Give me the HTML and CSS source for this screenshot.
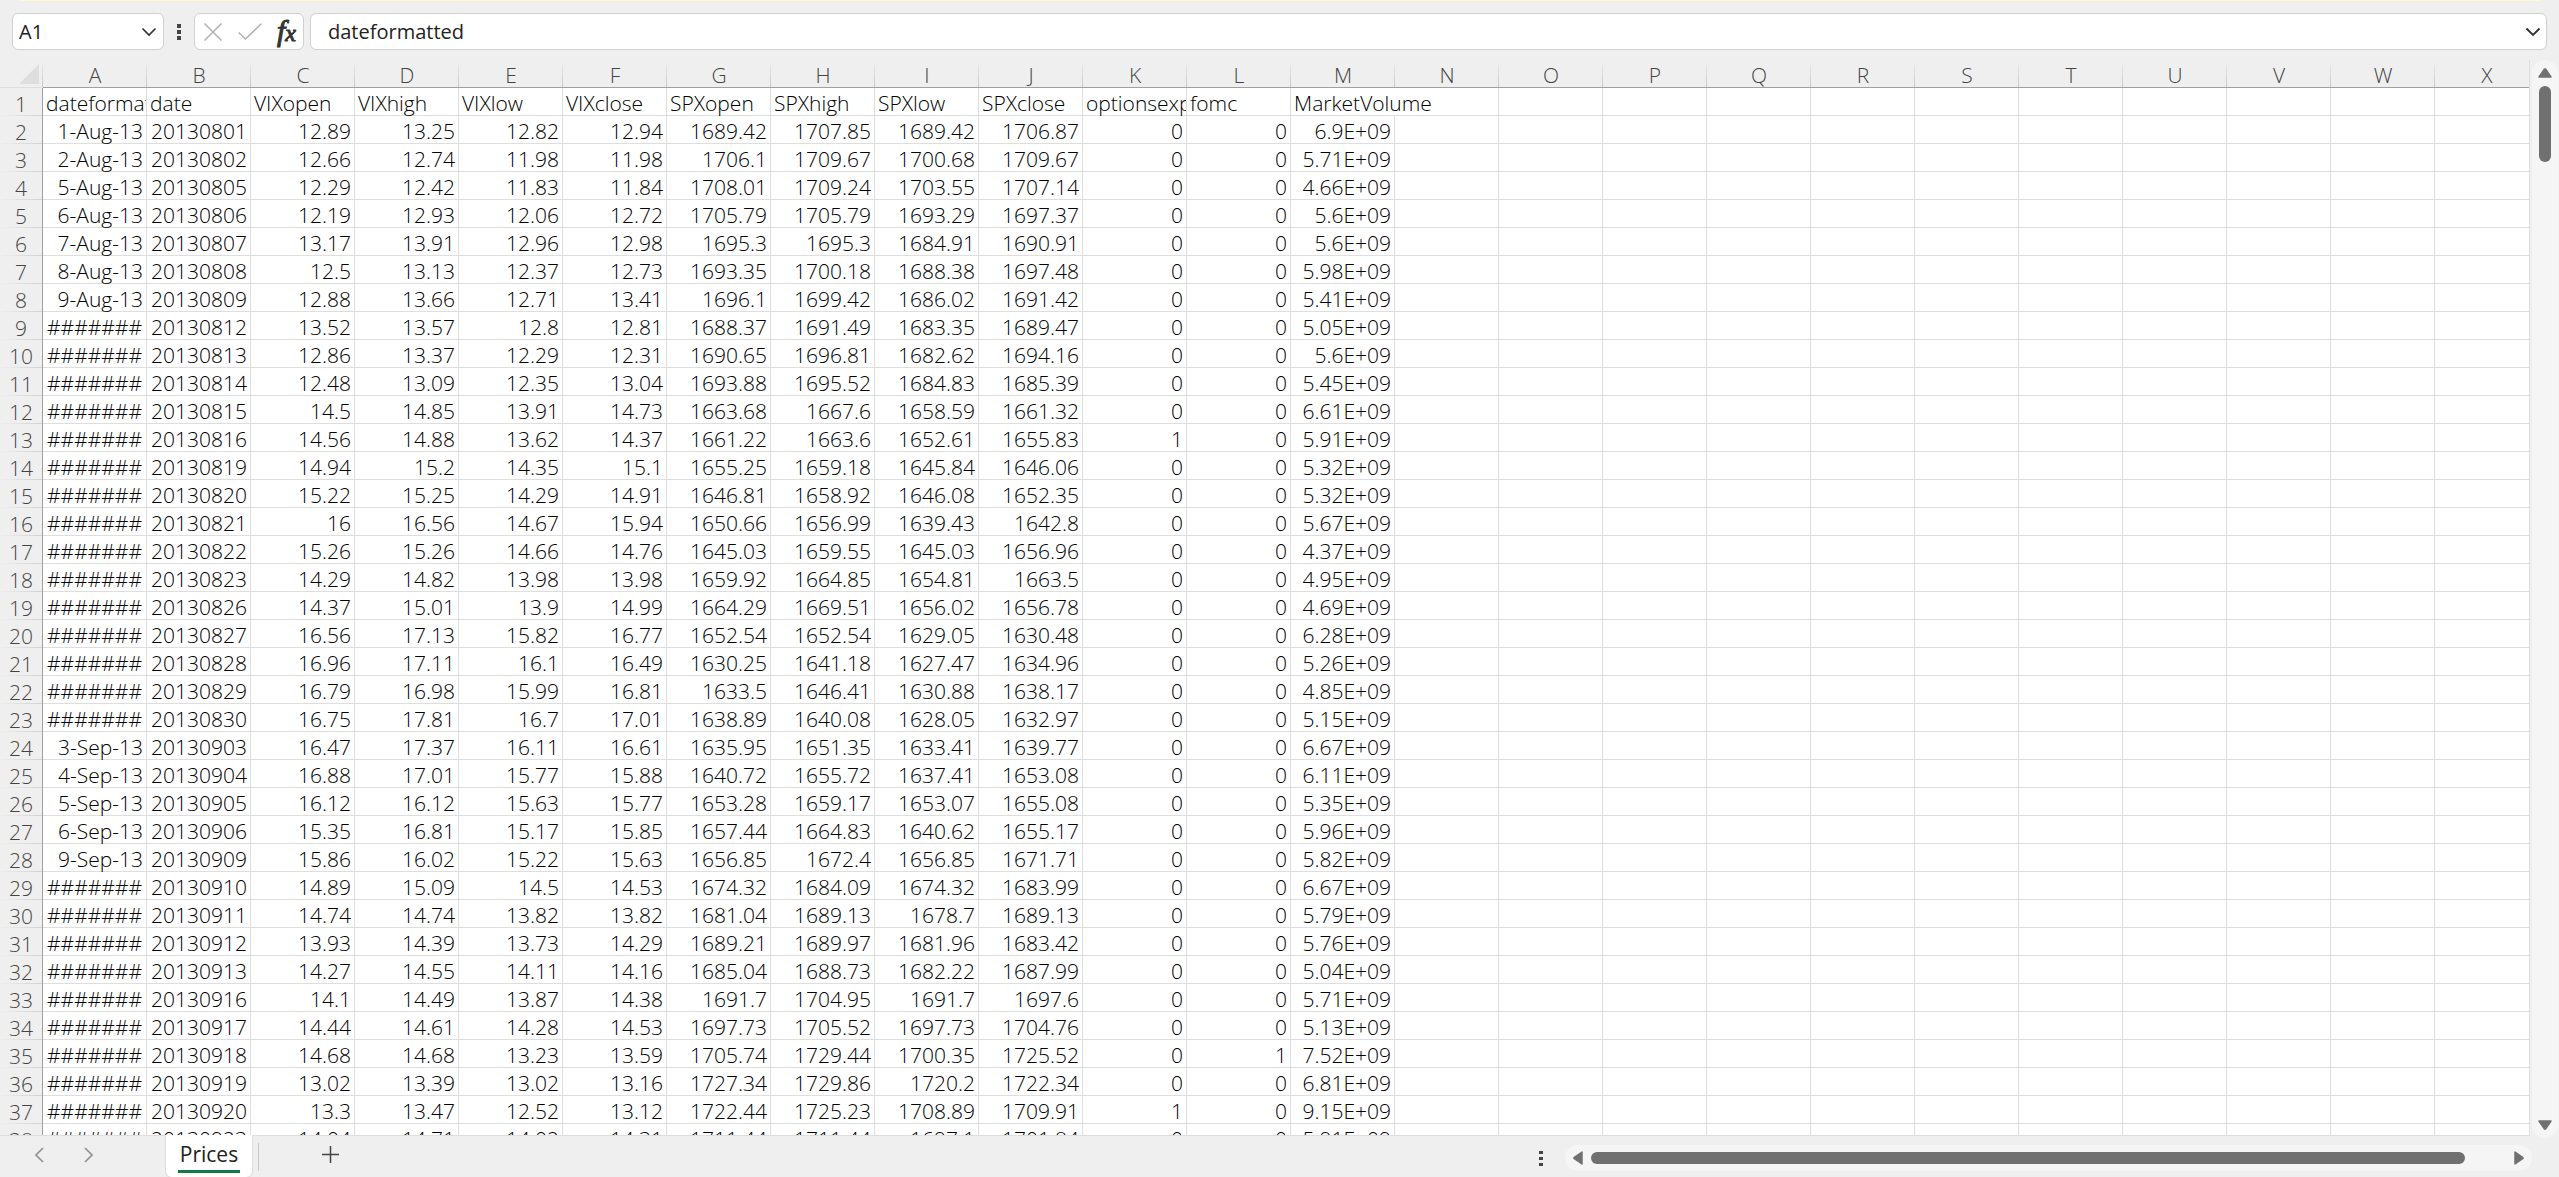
FILE: index.html
```html
<!DOCTYPE html>
<html lang="en">
<head>
<meta charset="utf-8">
<title>Prices</title>
<link rel="stylesheet" href="styles.css">
</head>
<body>
<div class="app">
  <div class="notice"></div>
  <header class="formula-bar">
    <div class="box name-box">
      <input class="field" type="text" value="A1" aria-label="Name box">
      <button class="icon-btn" type="button" aria-label="Name list"><svg width="16" height="10" viewBox="0 0 16 10"><path d="M1.500 1.500 8 8l6.500-6.500" fill="none" stroke="#333" stroke-width="1.700"/></svg></button>
    </div>
    <svg class="dots" width="4" height="16" viewBox="0 0 4 16"><path d="M0 0h4v4H0zM0 6h4v4H0zM0 12h4v4H0z" fill="#444"/></svg>
    <div class="box actions">
      <button class="icon-btn" type="button" aria-label="Cancel"><svg width="18" height="18" viewBox="0 0 18 18"><path d="M.5.5l17 17M17.500.5.5 17.500" fill="none" stroke="#b0b0b0" stroke-width="1.500"/></svg></button>
      <button class="icon-btn" type="button" aria-label="Enter"><svg width="24" height="17" viewBox="0 0 24 17"><path d="M.7 9.500 7.500 16 23.300.7" fill="none" stroke="#b0b0b0" stroke-width="1.500"/></svg></button>
      <button class="icon-btn fx" type="button" aria-label="Insert function"><i>f</i><i class="fx-x">x</i></button>
    </div>
    <div class="box formula">
      <input class="field" type="text" value="dateformatted" aria-label="Formula">
      <button class="icon-btn" type="button" aria-label="Expand formula bar"><svg width="16" height="10" viewBox="0 0 16 10"><path d="M1.500 1.500 8 8l6.500-6.500" fill="none" stroke="#333" stroke-width="1.900"/></svg></button>
    </div>
  </header>
  <main class="workspace">
    <div class="left">
      <div class="sheet">
        <table class="grid">
          <thead><tr id="letters"><th class="corner"><svg width="20" height="20" viewBox="0 0 20 20"><path d="M20 0v20H0z" fill="#dedede"/></svg></th></tr></thead>
          <tbody id="cells"></tbody>
        </table>
      </div>
      <footer class="tab-bar">
        <nav class="tab-nav">
          <button class="icon-btn" type="button" aria-label="Previous sheet"><svg width="9" height="16" viewBox="0 0 9 16"><path d="M8 1 1 8l7 7" fill="none" stroke="#909090" stroke-width="1.600"/></svg></button>
          <button class="icon-btn" type="button" aria-label="Next sheet"><svg width="9" height="16" viewBox="0 0 9 16"><path d="m1 1 7 7-7 7" fill="none" stroke="#909090" stroke-width="1.600"/></svg></button>
        </nav>
        <button class="tab" type="button"><span class="tab-label">Prices</span></button>
        <span class="divider"></span>
        <button class="icon-btn add" type="button" aria-label="New sheet"><svg width="17" height="17" viewBox="0 0 17 17"><path d="M8.500 0v17M0 8.500h17" stroke="#444" stroke-width="1.500"/></svg></button>
        <svg class="dots" width="4" height="16" viewBox="0 0 4 16"><path d="M0 0h4v3H0zM0 6h4v3H0zM0 12h4v3H0z" fill="#444"/></svg>
        <div class="scroll scroll-x">
          <svg width="10" height="14" viewBox="0 0 10 14"><path d="M9 1v12L1 7.500v-1z" fill="#707070" stroke="#707070" stroke-width="1.500" stroke-linejoin="round"/></svg>
          <div class="track"><div class="thumb"></div></div>
          <svg width="10" height="14" viewBox="0 0 10 14"><path d="M1 1v12l8-5.500v-1z" fill="#707070" stroke="#707070" stroke-width="1.500" stroke-linejoin="round"/></svg>
        </div>
      </footer>
    </div>
    <div class="scroll scroll-y">
      <svg width="14" height="10" viewBox="0 0 14 10"><path d="M1 9h12L7.500 1h-1z" fill="#707070" stroke="#707070" stroke-width="1.500" stroke-linejoin="round"/></svg>
      <div class="track"><div class="thumb"></div></div>
      <svg width="14" height="10" viewBox="0 0 14 10"><path d="M1 1h12L7.500 9h-1z" fill="#707070" stroke="#707070" stroke-width="1.500" stroke-linejoin="round"/></svg>
    </div>
  </main>
</div>
<script src="sheet.js"></script>
</body>
</html>
```
FILE: styles.css
```css
* { box-sizing: border-box; }

body {
  margin: 0;
  background: #efefef;
  color: #000;
  font-family: "Open Sans", "Noto Sans CJK SC", sans-serif;
}

button, input { font: inherit; color: inherit; border: 0; background: none; padding: 0; }

.app { height: 100vh; display: flex; flex-direction: column; overflow: hidden; }

.notice { height: 1px; margin: 0 18px 0 20px; background: #fff8cf; flex: none; }

/* Formula bar */
.formula-bar {
  display: flex;
  align-items: center;
  flex: none;
  padding: 12px 12px 10px;
  font-size: 20px;
  color: #222;
}
.box {
  display: flex;
  align-items: center;
  height: 37px;
  background: #fff;
  border: 1px solid #d0d0d0;
  border-radius: 6px;
}
.name-box { width: 152px; padding: 0 6px; }
.field { flex: 1; min-width: 0; height: 28px; outline: 0; }
.icon-btn { display: flex; align-items: center; justify-content: center; flex: none; }
.dots { flex: none; }
.formula-bar .dots { margin: 0 13px; }
.actions { width: 110px; padding: 0 7px 0 9px; justify-content: space-between; }
.fx {
  align-items: baseline;
  font: italic 400 30px/32px "Liberation Serif", serif;
  color: #333;
  -webkit-text-stroke: 1px #333;
}
.fx-x { font-size: 24px; }
.formula { flex: 1; margin-left: 6px; padding: 0 5px 0 17px; }

/* Workspace */
.workspace { flex: 1; min-height: 0; display: flex; }
.left { flex: 1; min-width: 0; display: flex; flex-direction: column; }
.sheet {
  flex: 1;
  min-height: 0;
  margin-right: 2px;
  overflow: hidden;
  border-right: 1px solid #dedede;
  border-bottom: 1px solid #dedede;
}
.grid {
  width: 2539px;
  table-layout: fixed;
  border-collapse: separate;
  border-spacing: 0;
  background: #fff;
  font-size: 21px;
  line-height: 24px;
  font-weight: 340;
}
.grid th, .grid td {
  width: 104px;
  height: 28px;
  padding: 3px 3px 0;
  border-right: 1px solid #dedede;
  border-bottom: 1px solid #dedede;
  white-space: nowrap;
}
.grid th { font-weight: 340; color: #444; background: #efefef; text-align: center; }
.grid thead th {
  padding: 3px 0 0;
  border-right: 0;
  border-bottom-color: #a0a0a0;
  background: linear-gradient(#efefef, #c8c8c8) right / 1px 100% no-repeat #efefef;
}
.grid thead .corner {
  width: 43px;
  padding: 1px 4px 0 0;
  line-height: 0;
  text-align: right;
  border-bottom-color: #dedede;
}
.grid tbody th {
  padding: 3px 0 0;
  border-right-color: #a0a0a0;
  border-bottom: 0;
  background: linear-gradient(to right, #efefef, #d0d0d0) bottom / 100% 1px no-repeat #efefef;
}
.grid td { text-align: right; }
.grid .text { text-align: left; overflow-x: clip; }
.grid .hashes { text-align: center; padding: 3px 0 0; }
.grid .spill { overflow: visible; border-right-color: transparent; }

/* Tab bar */
.tab-bar { flex: none; height: 41px; display: flex; align-items: center; }
.tab-nav { width: 166px; display: flex; gap: 40px; padding: 0 0 4px 35px; }
.tab {
  width: 86px;
  height: 42px;
  margin-top: -1px;
  padding: 3px 12px 4px;
  background: #fff;
  border-radius: 0 0 6px 6px;
  box-shadow: 0 0 1px 1px #dedede;
  clip-path: inset(0 -2px 0 -2px);
  font-size: 21px;
  line-height: 32px;
  color: #222;
}
.tab-label { display: block; border-bottom: 3px solid #107c41; }
.divider { width: 1px; height: 28px; margin-left: 6px; background: #c8c8c8; }
.add { margin: 0 auto 4px 63px; }
.tab-bar .dots { margin: 4px 22px 0 0; }

/* Scroll bars */
.scroll { display: flex; align-items: center; flex: none; background: #f5f5f5; border-radius: 13px; }
.track { flex: 1; display: flex; }
.thumb { background: #707070; border-radius: 6px; }
.scroll-x { width: calc(38% + 5px); height: 26px; margin-top: 3px; padding: 0 8px; gap: 8px; }
.scroll-x .thumb { width: 874px; max-width: 96%; height: 12px; }
.scroll-y { flex-direction: column; width: 26px; margin: 0 1px 39px 0; padding: 8px 0; gap: 8px; }
.scroll-y .track { min-height: 0; }
.scroll-y .thumb { width: 12px; height: 76px; }
```
FILE: sheet.js
```js
const columns = "ABCDEFGHIJKLMNOPQRSTUVWX".split("");

const headings = ["dateformatted", "date", "VIXopen", "VIXhigh", "VIXlow", "VIXclose",
  "SPXopen", "SPXhigh", "SPXlow", "SPXclose", "optionsexpiration", "fomc", "MarketVolume"];

const prices = `
1-Aug-13 20130801 12.89 13.25 12.82 12.94 1689.42 1707.85 1689.42 1706.87 0 0 6.9E+09
2-Aug-13 20130802 12.66 12.74 11.98 11.98 1706.1 1709.67 1700.68 1709.67 0 0 5.71E+09
5-Aug-13 20130805 12.29 12.42 11.83 11.84 1708.01 1709.24 1703.55 1707.14 0 0 4.66E+09
6-Aug-13 20130806 12.19 12.93 12.06 12.72 1705.79 1705.79 1693.29 1697.37 0 0 5.6E+09
7-Aug-13 20130807 13.17 13.91 12.96 12.98 1695.3 1695.3 1684.91 1690.91 0 0 5.6E+09
8-Aug-13 20130808 12.5 13.13 12.37 12.73 1693.35 1700.18 1688.38 1697.48 0 0 5.98E+09
9-Aug-13 20130809 12.88 13.66 12.71 13.41 1696.1 1699.42 1686.02 1691.42 0 0 5.41E+09
####### 20130812 13.52 13.57 12.8 12.81 1688.37 1691.49 1683.35 1689.47 0 0 5.05E+09
####### 20130813 12.86 13.37 12.29 12.31 1690.65 1696.81 1682.62 1694.16 0 0 5.6E+09
####### 20130814 12.48 13.09 12.35 13.04 1693.88 1695.52 1684.83 1685.39 0 0 5.45E+09
####### 20130815 14.5 14.85 13.91 14.73 1663.68 1667.6 1658.59 1661.32 0 0 6.61E+09
####### 20130816 14.56 14.88 13.62 14.37 1661.22 1663.6 1652.61 1655.83 1 0 5.91E+09
####### 20130819 14.94 15.2 14.35 15.1 1655.25 1659.18 1645.84 1646.06 0 0 5.32E+09
####### 20130820 15.22 15.25 14.29 14.91 1646.81 1658.92 1646.08 1652.35 0 0 5.32E+09
####### 20130821 16 16.56 14.67 15.94 1650.66 1656.99 1639.43 1642.8 0 0 5.67E+09
####### 20130822 15.26 15.26 14.66 14.76 1645.03 1659.55 1645.03 1656.96 0 0 4.37E+09
####### 20130823 14.29 14.82 13.98 13.98 1659.92 1664.85 1654.81 1663.5 0 0 4.95E+09
####### 20130826 14.37 15.01 13.9 14.99 1664.29 1669.51 1656.02 1656.78 0 0 4.69E+09
####### 20130827 16.56 17.13 15.82 16.77 1652.54 1652.54 1629.05 1630.48 0 0 6.28E+09
####### 20130828 16.96 17.11 16.1 16.49 1630.25 1641.18 1627.47 1634.96 0 0 5.26E+09
####### 20130829 16.79 16.98 15.99 16.81 1633.5 1646.41 1630.88 1638.17 0 0 4.85E+09
####### 20130830 16.75 17.81 16.7 17.01 1638.89 1640.08 1628.05 1632.97 0 0 5.15E+09
3-Sep-13 20130903 16.47 17.37 16.11 16.61 1635.95 1651.35 1633.41 1639.77 0 0 6.67E+09
4-Sep-13 20130904 16.88 17.01 15.77 15.88 1640.72 1655.72 1637.41 1653.08 0 0 6.11E+09
5-Sep-13 20130905 16.12 16.12 15.63 15.77 1653.28 1659.17 1653.07 1655.08 0 0 5.35E+09
6-Sep-13 20130906 15.35 16.81 15.17 15.85 1657.44 1664.83 1640.62 1655.17 0 0 5.96E+09
9-Sep-13 20130909 15.86 16.02 15.22 15.63 1656.85 1672.4 1656.85 1671.71 0 0 5.82E+09
####### 20130910 14.89 15.09 14.5 14.53 1674.32 1684.09 1674.32 1683.99 0 0 6.67E+09
####### 20130911 14.74 14.74 13.82 13.82 1681.04 1689.13 1678.7 1689.13 0 0 5.79E+09
####### 20130912 13.93 14.39 13.73 14.29 1689.21 1689.97 1681.96 1683.42 0 0 5.76E+09
####### 20130913 14.27 14.55 14.11 14.16 1685.04 1688.73 1682.22 1687.99 0 0 5.04E+09
####### 20130916 14.1 14.49 13.87 14.38 1691.7 1704.95 1691.7 1697.6 0 0 5.71E+09
####### 20130917 14.44 14.61 14.28 14.53 1697.73 1705.52 1697.73 1704.76 0 0 5.13E+09
####### 20130918 14.68 14.68 13.23 13.59 1705.74 1729.44 1700.35 1725.52 0 1 7.52E+09
####### 20130919 13.02 13.39 13.02 13.16 1727.34 1729.86 1720.2 1722.34 0 0 6.81E+09
####### 20130920 13.3 13.47 12.52 13.12 1722.44 1725.23 1708.89 1709.91 1 0 9.15E+09
####### 20130923 14.04 14.71 14.02 14.31 1711.44 1711.44 1697.1 1701.84 0 0 5.91E+09
`.trim().split("\n").map(line => line.split(" "));

const letterRow = document.getElementById("letters");
for (const letter of columns) {
  const th = document.createElement("th");
  th.scope = "col";
  th.textContent = letter;
  letterRow.append(th);
}

const body = document.getElementById("cells");
[headings, ...prices].forEach((values, index) => {
  const row = body.insertRow();
  const th = document.createElement("th");
  th.scope = "row";
  th.textContent = index + 1;
  row.append(th);
  columns.forEach((_, i) => {
    const cell = row.insertCell();
    const value = values[i] || "";
    cell.textContent = value;
    if (index === 0) cell.className = "text";
    if (value === "MarketVolume") cell.classList.add("spill");
    if (value.startsWith("#")) cell.className = "hashes";
  });
});
```
